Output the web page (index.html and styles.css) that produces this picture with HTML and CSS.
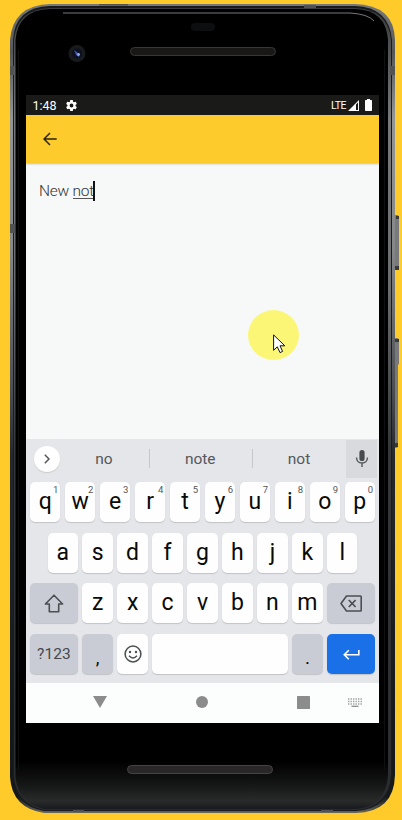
FILE: index.html
```
<!DOCTYPE html>
<html lang="en">
<head>
<meta charset="utf-8">
<title>Notes</title>
<link rel="stylesheet" href="styles.css">
</head>
<body>
<div class="phone">
  <svg class="shell" width="402" height="820" viewBox="0 0 402 820" aria-hidden="true">
    <defs>
      <linearGradient id="metal" x1="0" y1="0" x2="0" y2="1">
        <stop offset="0" stop-color="#77787a"/><stop offset=".06" stop-color="#555658"/><stop offset=".14" stop-color="#929496"/><stop offset=".3" stop-color="#858789"/><stop offset=".48" stop-color="#4a4d50"/><stop offset=".56" stop-color="#24282b"/><stop offset=".9" stop-color="#15181b"/><stop offset=".98" stop-color="#15181b"/><stop offset="1" stop-color="#66675f"/>
      </linearGradient>
      <linearGradient id="inner" x1="0" y1="0" x2="0" y2="1">
        <stop offset="0" stop-color="#3a3b3d"/><stop offset=".14" stop-color="#77797b"/><stop offset=".35" stop-color="#6a6c6e"/><stop offset=".55" stop-color="#35383b"/><stop offset="1" stop-color="#292c2f"/>
      </linearGradient>
      <linearGradient id="chin" x1="0" y1="0" x2="0" y2="1">
        <stop offset="0" stop-color="#000"/><stop offset=".94" stop-color="#000"/><stop offset=".97" stop-color="#151616"/><stop offset=".99" stop-color="#292a2a"/><stop offset="1" stop-color="#171a1d"/>
      </linearGradient>
    </defs>
    <path fill="#77797b" d="M394 215h3q2 0 2 2v51q0 2-2 2h-3zM394 338h3q2 0 2 2v24l-1 1v81q0 2-2 2h-2z"/>
    <path fill="#37393b" d="M396 216h3v3h-3zM395 266h4v4h-4zM395 339h4v3h-4zM394 443h4v4h-4z"/>
    <path fill="url(#metal)" d="M50 4H355Q394 5 395 40V775Q394 812 356 813H44Q12 808 10 777V40Q13 5 50 4Z"/>
    <path fill="#191b1d" d="M50 6H355Q389 7 392 40V775Q390 809 356 811H44Q15 806 13 777V40Q15 7 50 6Z"/>
    <path fill="url(#inner)" d="M50 8H355Q388 9 391 40V775Q388 808 356 810H44Q17 804 14 777V40Q17 9 50 8Z"/>
    <path fill="url(#chin)" d="M50 9H355Q386 10 388 40V775Q386 807 356 809H44Q18 803 15.500 777V40Q18 10 50 9Z"/>
    <path fill="none" stroke="#0e1011" d="M18.500 50V770M384.500 50V770"/>
    <path fill="none" stroke="#77797b" d="M63 13H350Q368 14 374 21"/>
    <path fill="#505254" d="M10 66h4v9h-4zM390 66h5v9h-5zM10 224h5v9h-5zM99 4h29v1.500H99zM304 5h12v3h-12zM73 810h11v2H73zM321 810h12v2h-12z"/>
    <rect x="191" y="23" width="24" height="8" rx="4" fill="#0c0e0f"/>
    <circle cx="77" cy="53.500" r="8.500" fill="#181a1c"/><circle cx="77" cy="53.500" r="5" fill="#0c1020"/><path d="M74 50l4 3 2 1-1 3-3-2z" fill="#4057a5"/><circle cx="78.500" cy="54.500" r="1.400" fill="#8ca9f0"/>
    <rect x="130.500" y="47.500" width="145" height="8" rx="4" fill="#191817" stroke="#383736"/>
    <rect x="127.500" y="765.500" width="145" height="8" rx="4" fill="#292727" stroke="#464443"/>
  </svg>
  <main class="screen">
    <header class="status">
      <span class="time">1:48</span>
      <svg class="gear" width="13" height="13" viewBox="0 0 24 24"><path fill="#fff" fill-rule="evenodd" d="M19.400 13a7.500 7.500 0 0 0 0-2l2.200-1.700a.5.500 0 0 0 .1-.6l-2-3.500a.5.500 0 0 0-.6-.2l-2.500 1a7.500 7.500 0 0 0-1.700-1L14.500 2.400a.5.500 0 0 0-.5-.4h-4a.5.500 0 0 0-.5.400L9.100 5a7.500 7.500 0 0 0-1.700 1l-2.500-1a.5.500 0 0 0-.6.200l-2 3.500a.5.500 0 0 0 .1.600L4.600 11a7.500 7.500 0 0 0 0 2l-2.200 1.700a.5.500 0 0 0-.1.600l2 3.500c.1.200.4.300.6.200l2.500-1a7.500 7.500 0 0 0 1.700 1l.4 2.600c0 .2.200.4.500.4h4c.3 0 .5-.2.500-.4l.4-2.600a7.500 7.500 0 0 0 1.700-1l2.500 1c.2.100.5 0 .6-.2l2-3.500a.5.500 0 0 0-.1-.6zM12 15.500a3.500 3.500 0 1 1 0-7 3.500 3.500 0 0 1 0 7z"/></svg>
      <span class="lte">LTE</span>
      <svg class="signal" width="11" height="11" viewBox="0 0 11 11"><path fill="#fff" fill-rule="evenodd" d="M0 11L11 0v11zM8 4.500V10h2V2.500z"/></svg>
      <svg class="battery" width="7" height="12" viewBox="0 0 7 12"><path fill="#fff" d="M2 0h3v1h1.300q.7 0 .7.700v9.600q0 .7-.7.700H.7Q0 12 0 11.300V1.700Q0 1 .7 1H2z"/></svg>
    </header>
    <div class="appbar">
      <svg width="14" height="14" viewBox="0 0 14 14"><path fill="none" stroke="#2d250c" stroke-width="1.500" d="M13.700 7H1.200M7 1L1 7l6 6"/></svg>
    </div>
    <section class="editor">
      <p class="note">New <span class="composing">not</span><span class="caret"></span></p>
      <div class="pointer">
        <svg width="13" height="20" viewBox="0 0 13 20"><path fill="#fff" stroke="#111" d="M.6.900V16.300L4.300 12.800 7 18.600 9.600 17.400 7 11.800H11.800Z"/></svg>
      </div>
    </section>
    <section class="keyboard">
      <div class="suggestions">
        <span class="expand"><svg width="6" height="10" viewBox="0 0 6 10"><path fill="none" stroke="#55575a" stroke-width="1.500" d="M.8.700L5 5 .8 9.300"/></svg></span>
        <span class="word">no</span><span class="word">note</span><span class="word last">not</span>
        <span class="mic"><svg width="14" height="18" viewBox="0 0 14 18"><rect x="4.400" y="0" width="5.200" height="11" rx="2.600" fill="#484b4d"/><path fill="none" stroke="#55585a" stroke-width="1.400" d="M1.500 7.500Q1.800 13 7 13t5.500-5.500M7 13v4"/></svg></span>
      </div>
      <div class="rows">
        <div class="row"><span class="key">q<sup>1</sup></span><span class="key">w<sup>2</sup></span><span class="key">e<sup>3</sup></span><span class="key">r<sup>4</sup></span><span class="key">t<sup>5</sup></span><span class="key">y<sup>6</sup></span><span class="key">u<sup>7</sup></span><span class="key">i<sup>8</sup></span><span class="key">o<sup>9</sup></span><span class="key">p<sup>0</sup></span></div>
        <div class="row"><span class="key">a</span><span class="key">s</span><span class="key">d</span><span class="key">f</span><span class="key">g</span><span class="key">h</span><span class="key">j</span><span class="key">k</span><span class="key">l</span></div>
        <div class="row">
          <span class="key wide gray"><svg width="20" height="19" viewBox="0 0 20 19"><path fill="none" stroke="#4b4e51" stroke-width="1.600" stroke-linejoin="round" d="M10 1.200L1.400 10H5.300v7.700h9.400V10h3.900z"/></svg></span>
          <span class="key">z</span><span class="key">x</span><span class="key">c</span><span class="key">v</span><span class="key">b</span><span class="key">n</span><span class="key">m</span>
          <span class="key wide gray"><svg width="22" height="17" viewBox="0 0 22 17"><path fill="none" stroke="#4b4e51" stroke-width="1.600" stroke-linejoin="round" d="M6.500 1H20.500q.7 0 .7.700V15.300q0 .7-.7.700H6.500L1 8.500z"/><path stroke="#4b4e51" stroke-width="1.700" d="M8.800 5l6.800 7M15.600 5l-6.800 7"/></svg></span>
        </div>
        <div class="row">
          <span class="key wide gray symbols">?123</span><span class="key gray punct">,</span>
          <span class="key"><svg width="18" height="18" viewBox="0 0 18 18"><circle cx="9" cy="9" r="7.900" fill="none" stroke="#4b4e51" stroke-width="1.500"/><circle cx="6" cy="7" r="1.200" fill="#4b4e51"/><circle cx="12" cy="7" r="1.200" fill="#4b4e51"/><path d="M5 10.800q4 4.300 8 0" fill="none" stroke="#4b4e51" stroke-width="1.400"/></svg></span>
          <span class="key space"></span><span class="key gray punct">.</span>
          <span class="key wide enter"><svg width="17" height="11" viewBox="0 0 17 11"><path fill="none" stroke="#fff" stroke-width="1.600" d="M15.800 1V5.800H1.500M5.800 1.200L1.200 5.800l4.600 4.500"/></svg></span>
        </div>
      </div>
    </section>
    <nav class="nav">
      <svg width="14" height="12" viewBox="0 0 14 12"><path fill="#8b8c8b" d="M0 0h14L7 12z"/></svg>
      <svg width="12" height="12" viewBox="0 0 12 12"><circle cx="6" cy="6" r="6" fill="#8b8c8b"/></svg>
      <svg width="13" height="13" viewBox="0 0 13 13"><rect width="13" height="13" rx=".6" fill="#8b8c8b"/></svg>
      <svg width="14" height="9" viewBox="0 0 14 9"><path fill="none" stroke="#a0a1a1" stroke-width="1.300" stroke-dasharray="1.400 1.100" d="M0 1h14M0 3.500h14M0 6h14"/><path stroke="#8b8c8b" stroke-width="1.300" d="M3.500 8.300h7"/></svg>
    </nav>
  </main>
</div>
</body>
</html>
```
FILE: styles.css
```
* { box-sizing: border-box; }
body { margin: 0; background: #fecb2b; font-family: Roboto, "Liberation Sans", sans-serif; }
svg { display: block; flex: none; }
.phone { position: relative; width: 402px; height: 820px; padding: 95px 23px 97px 26px; overflow: hidden; }
.shell { position: absolute; inset: 0; }
.screen { position: relative; height: 628px; display: flex; flex-direction: column; background: #f7f9f8; }
.status { height: 20px; display: flex; align-items: center; padding: 0 7px 0 6px; background: #1a1b19; color: #fff; }
.time { font-size: 12.500px; line-height: 20px; width: 33px; padding: 1px 0 0 .5px; }
.lte { margin-left: auto; font-size: 10.500px; line-height: 20px; letter-spacing: -.5px; padding-top: 1px; }
.signal { margin-left: 2px; }
.battery { margin-left: 6px; }
.appbar { height: 48px; display: flex; align-items: center; padding-left: 17px; background: #fdcb2b; box-shadow: 0 1px 2px #bbbdb9; clip-path: inset(0 0 -4px); z-index: 1; }
.editor { position: relative; flex: 1; padding: 18px 13px; }
.note { margin: 0; display: flex; white-space: pre; font-size: 15.500px; font-weight: 300; line-height: 21px; letter-spacing: -.25px; color: #333; }
.composing { height: 18px; border-bottom: 1px solid #555; }
.caret { width: 2px; height: 20px; background: #111; margin-left: -1px; }
.pointer { position: absolute; left: 222px; top: 147px; width: 51px; height: 50px; border-radius: 50%; background: #fcf676; padding: 24px 0 0 25px; }
.keyboard { height: 244px; background: #e5e6ea; }
.suggestions { height: 43px; display: flex; align-items: center; padding: 0 2px 4px 8px; }
.expand { width: 26px; height: 26px; border-radius: 50%; background: #fff; display: grid; place-items: center; box-shadow: 0 1px 1px #ccc; }
.word { width: 103.500px; height: 19px; font-size: 15.500px; line-height: 21px; text-align: center; color: #55585c; border-right: 1px solid #c5c7ca; margin-left: -.5px; }
.expand + .word { width: 90px; }
.suggestions .last { width: auto; flex: 1; border: 0; }
.mic { width: 31px; height: 38px; display: grid; place-items: center; background: #d8dadd; }
.rows { padding: 0 4px; display: grid; gap: 10.600px; }
.row { display: flex; justify-content: center; gap: 4.600px; }
.key { position: relative; width: 30.360px; height: 40px; border-radius: 5px; display: flex; align-items: center; justify-content: center; background: #fdfefd; box-shadow: 0 1px 1px #c0c2c7; color: #090a0a; font-size: 23px; line-height: 40px; }
.key sup { position: absolute; right: 2px; top: 2px; font-size: 9.500px; line-height: 12px; color: #55575a; }
.wide { width: 47.800px; }
.gray { background: #caccd5; }
.symbols { font-size: 15.500px; letter-spacing: .1px; padding-top: 1px; color: #44474b; }
.punct { font-size: 19px; padding-top: 8px; }
.space { flex: 1; }
.enter { background: #1a70e6; padding-top: 1px; }
.nav { height: 40px; display: flex; align-items: center; padding: 0 17px 2px 67px; background: #fcfefd; }
.nav svg:nth-child(2) { margin-left: 89px; }
.nav svg:nth-child(3) { margin-left: 89px; }
.nav svg:nth-child(4) { margin-left: auto; }
```
